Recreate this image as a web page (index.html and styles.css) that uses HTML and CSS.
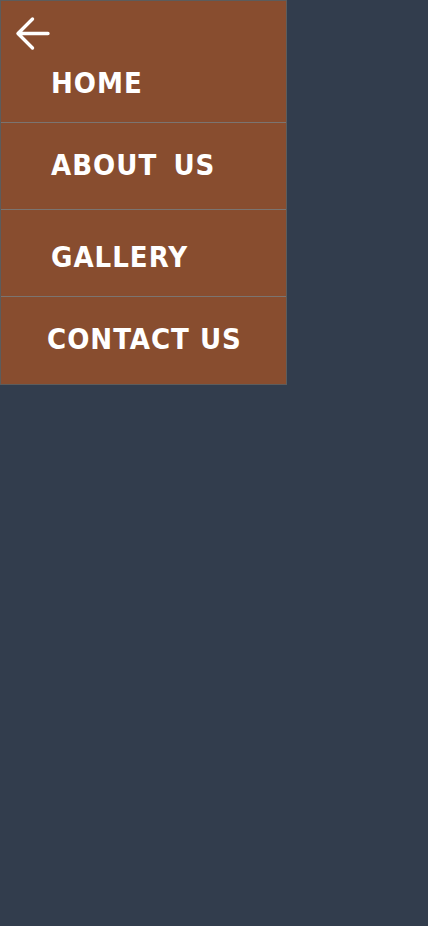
FILE: index.html
```html
<!DOCTYPE html>
<html lang="en">
<head>
<meta charset="utf-8">
<title>Menu</title>
<link rel="stylesheet" href="styles.css">
</head>
<body>
<nav class="drawer">
  <ul class="menu">
    <li class="item item-first">
      <button class="back" aria-label="Close menu">
        <svg width="36" height="36" viewBox="0 0 36 36" fill="none" stroke="#ffffff" stroke-width="3.4" stroke-linecap="round" stroke-linejoin="round"><path d="M34 18.5H4M18.5 4L4 18.5L18.5 33"/></svg>
      </button>
      <a class="link" href="#">HOME</a>
    </li>
    <li class="item item-about"><a class="link link-about" href="#">ABOUT&nbsp; US</a></li>
    <li class="item item-gallery"><a class="link" href="#">GALLERY</a></li>
    <li class="item item-contact"><a class="link link-contact" href="#">CONTACT US</a></li>
  </ul>
</nav>
</body>
</html>
```
FILE: styles.css
```css
html, body {
  margin: 0;
  padding: 0;
}
body {
  background: #323d4d;
  min-height: 926px;
  font-family: "DejaVu Sans Condensed", "DejaVu Sans", sans-serif;
}
.drawer {
  width: 287px;
  box-sizing: border-box;
  background: #884d2f;
  border: 1px solid #5c5c5c;
}
.menu {
  list-style: none;
  margin: 0;
  padding: 0;
}
.item {
  box-sizing: border-box;
  border-bottom: 1px solid #7b7470;
}
.item-first {
  height: 122px;
  padding-top: 14px;
}
.item-about {
  height: 87px;
  padding-top: 25px;
}
.item-gallery {
  height: 87px;
  padding-top: 30px;
}
.item-contact {
  height: 87px;
  padding-top: 25px;
  border-bottom: none;
}
.back {
  display: block;
  margin: 0 0 15px 13px;
  padding: 0;
  width: 36px;
  height: 36px;
  background: none;
  border: none;
}
.back svg {
  display: block;
}
.link {
  display: block;
  padding-left: 50px;
  color: #ffffff;
  text-decoration: none;
  font-weight: bold;
  font-size: 29px;
  line-height: 34px;
  letter-spacing: 1px;
}
.link-about {
  word-spacing: -2px;
}
.link-contact {
  padding-left: 46px;
}
```
